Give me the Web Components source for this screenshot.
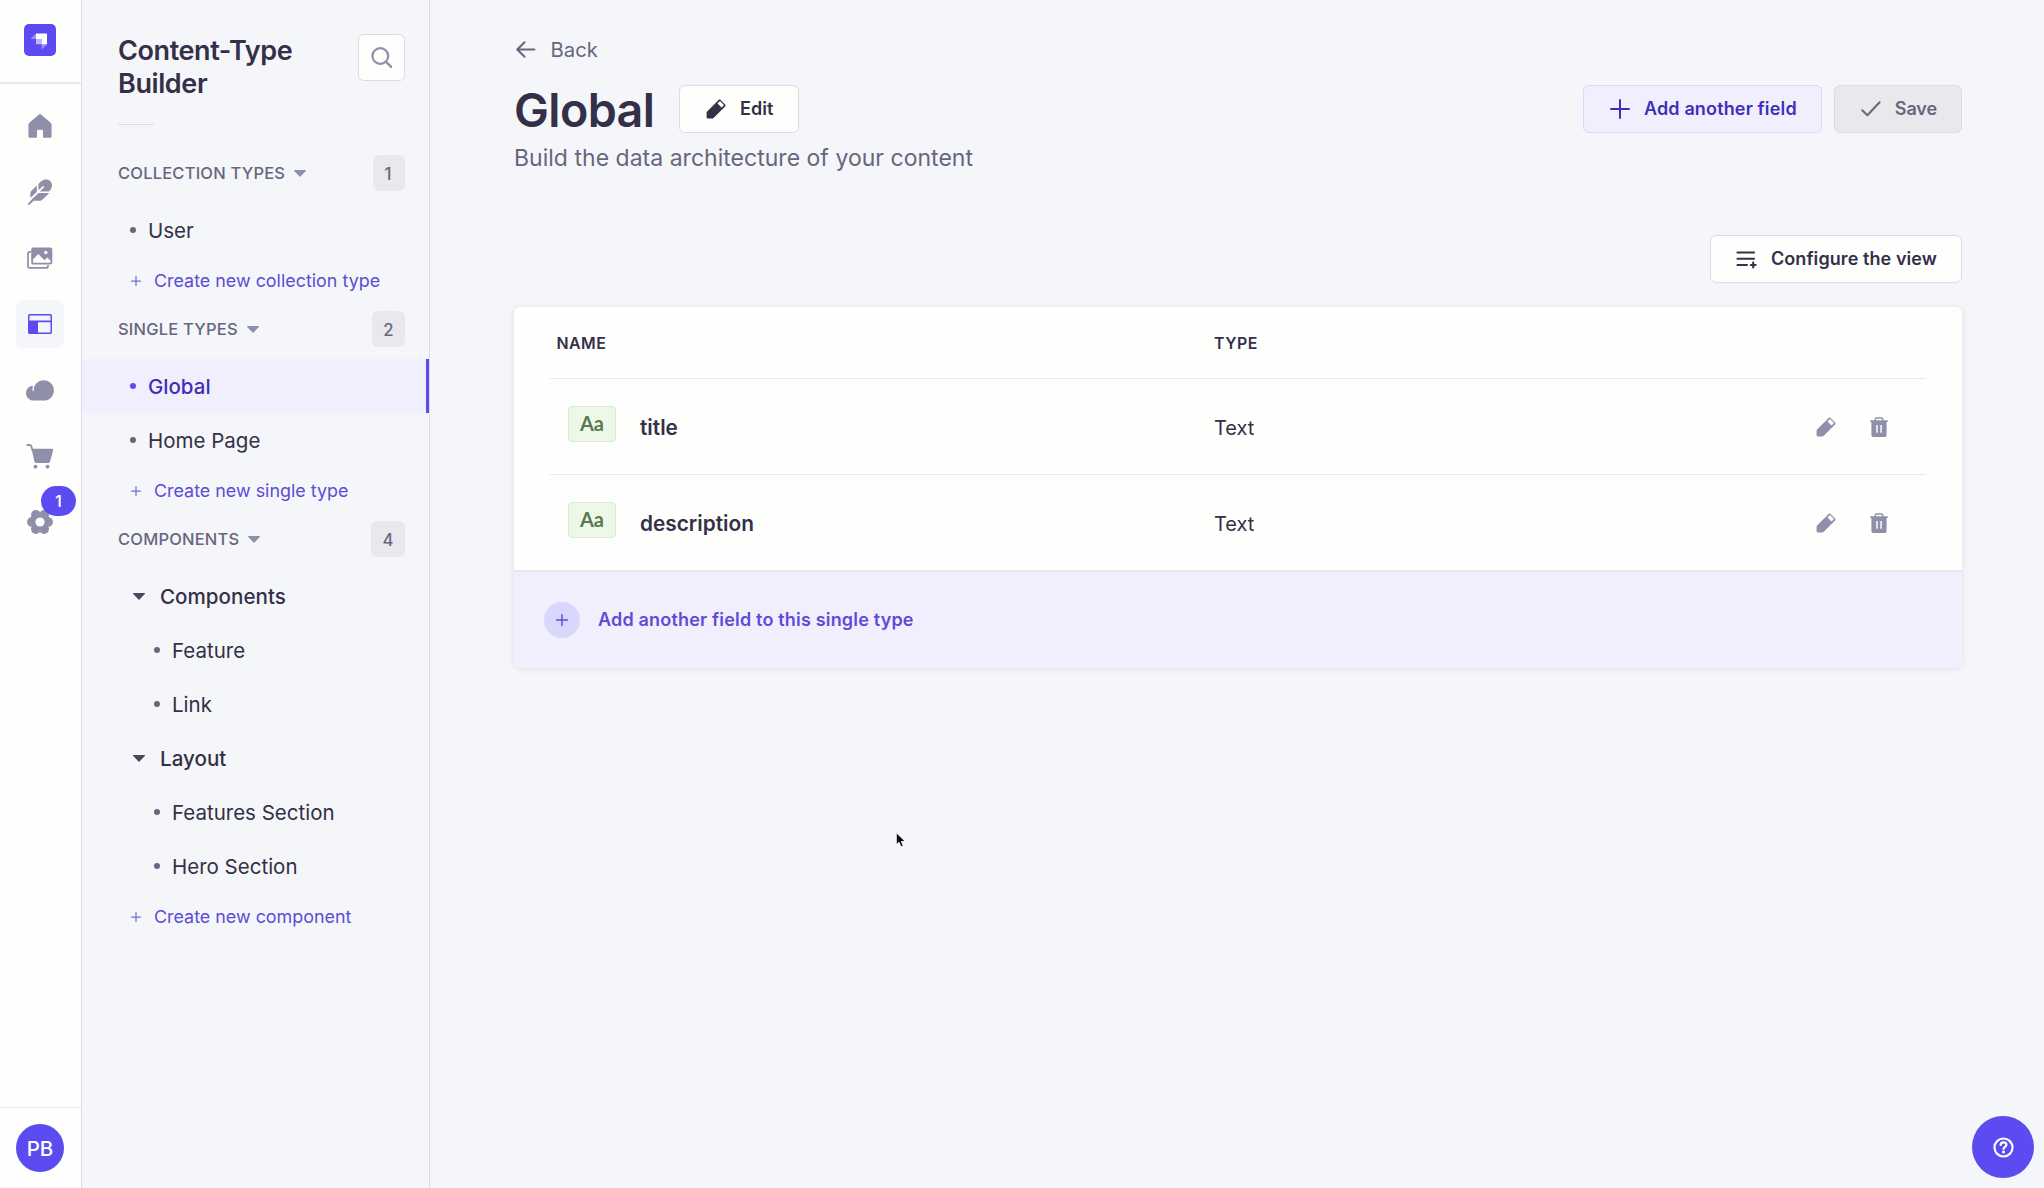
<!DOCTYPE html>
<html lang="en">
<head>
<meta charset="utf-8">
<title>Content-Type Builder</title>
<style>
:root{
  --primary:#5b4bf1;--primary-dark:#3f2fb8;--primary-bg:#f1effd;--primary-soft:#d9d7fb;--link:#5c4cd6;
  --n0:#fefefd;--n100:#f5f6f9;--n150:#e9e8ed;--n200:#dcdbe4;--n500:#908fa9;--n600:#68657f;--n800:#333047;
}
html,body{margin:0;height:100%}
body{font-family:Inter,"Liberation Sans",sans-serif;color:var(--n800);background:var(--n100);overflow:hidden}
</style>
</head>
<body>
<ctb-app></ctb-app>
<script>
const ICONS={
  home:['0 0 24 24','<path fill="currentColor" d="M10.900.500a1.600 1.600 0 0 1 2.200 0l9.500 8.300a3 3 0 0 1 1 2.200V22.300a1.500 1.500 0 0 1-1.500 1.500H16a1 1 0 0 1-1-1V17a1.200 1.200 0 0 0-1.200-1.200h-3.600A1.200 1.200 0 0 0 9 17v5.800a1 1 0 0 1-1 1H1.900A1.500 1.500 0 0 1 .4 22.300V11a3 3 0 0 1 1-2.200z"/>'],
  feather:['0 0 26 26','<path fill="currentColor" d="M3.400 19V14.200c0-1 .4-1.800 1-2.400L9.800 6.400v6.400zM11.400 11.300V5l2.500-2.500C15.800.8 18 .2 20 .5c2.900.4 5 2.900 5 5.800 0 1.700-.5 3.200-1.600 4.500l-1.500 1.800H12.900l4.400-4.700-1.100-1.100zM22.300 14.100l-6.600 6.300c-.9.900-1.900 1.400-3.200 1.400H6.800l-4.500 4c-.9.8-2-.3-1.200-1.200l4.400-4.900 6-5.600z"/>'],
  images:['0 0 26 22','<path fill="none" stroke="currentColor" stroke-width="1.700" d="M4 4.900H2.700A1.700 1.700 0 0 0 1 6.600v12.600c0 1 .7 1.700 1.700 1.700h16.600c1 0 1.700-.7 1.700-1.700V18"/><path fill="currentColor" fill-rule="evenodd" d="M6.200.4h17.100c1.200 0 2 .9 2 2v13.200c0 1.100-.8 2-2 2H6.200c-1.200 0-2-.9-2-2V2.400c0-1.100.8-2 2-2zM6 15.800h17.500v-2.200l-3.300-3-2.600 2.600-6.400-6.100L6 12.400zM18.800 3.800a1.700 1.700 0 1 0 0 3.400 1.700 1.700 0 0 0 0-3.400z"/>'],
  layout:['0 0 24 20','<path fill="currentColor" fill-rule="evenodd" d="M1.800 0h20.400C23.200 0 24 .8 24 1.800v16.400c0 1-.8 1.800-1.800 1.800H1.800C.8 20 0 19.200 0 18.200V1.800C0 .8.800 0 1.800 0zM1.500 1.500v5h21v-5zM10 8.200v10.300h12.500V8.200z"/>'],
  cloud:['0 0 28 21','<path fill="currentColor" d="M17.700.3C12.900.3 9 3.600 7.900 8c-.2.900-.3 1.900-.2 2.800 0 .6-1 .7-1.200 0-.2-1.500 0-3 .4-4.400.1-.5-.2-.8-.7-.7C2.700 6.300 0 9.400 0 13c0 4.200 3.400 7.600 7.500 7.600h10.200c5.700 0 10.200-4.600 10.200-10.200C27.900 4.800 23.400.3 17.700.3z"/>'],
  cart:['0 0 27 25','<path fill="none" stroke="currentColor" stroke-width="1.800" stroke-linecap="round" d="M.4 1h2.400c.7 0 1.200.4 1.400 1L5.600 6.500"/><path fill="currentColor" d="M4.600 4.800h20.400c.8 0 1.300.7 1.100 1.500l-3 11c-.3 1.100-1.200 1.800-2.400 1.800H9.800c-1.100 0-2-.7-2.400-1.700z"/><circle cx="8.500" cy="22.700" r="1.900" fill="currentColor"/><circle cx="20.500" cy="22.700" r="1.900" fill="currentColor"/>'],
  gear:['0 0 26 26','<g fill="currentColor"><circle cx="13" cy="13" r="9"/><circle cx="21" cy="13" r="4.900"/><circle cx="5" cy="13" r="4.900"/><circle cx="17.100" cy="5.900" r="4.900"/><circle cx="8.900" cy="5.900" r="4.900"/><circle cx="17.100" cy="20.100" r="4.900"/><circle cx="8.900" cy="20.100" r="4.900"/></g><circle cx="13" cy="13" r="4.600" fill="var(--n0)"/>'],
  search:['0 0 21 21','<circle cx="9.300" cy="9" r="7.900" fill="none" stroke="currentColor" stroke-width="2.200"/><path d="M15.100 14.800l5 5" stroke="currentColor" stroke-width="2.400" stroke-linecap="round"/>'],
  caret:['0 0 12 7','<path fill="currentColor" d="M.6 0h10.800c.5 0 .8.600.4 1L6.500 6.500a.7.700 0 0 1-1 0L.2 1C-.2.600.1 0 .6 0z"/>'],
  plus:['0 0 20 20','<path d="M10 1v18M1 10h18" stroke="currentColor" stroke-width="var(--sw,2)" stroke-linecap="round"/>'],
  back:['0 0 20 17','<path fill="none" stroke="currentColor" stroke-width="2" stroke-linecap="round" stroke-linejoin="round" d="M18.400 8.500H1.500M8.600 1.200L1.200 8.500l7.400 7.300"/>'],
  pencil:['0 0 20 20','<path fill="currentColor" fill-rule="evenodd" d="M12.600.9c.6-.6 1.400-.6 2 0l4.500 4.500c.6.600.6 1.400 0 2L7.500 18.900c-.4.400-.8.500-1.300.5H1.900c-.8 0-1.300-.5-1.300-1.300v-4.300c0-.5.2-1 .5-1.300zM13.600 2.300l-2.100 2.200 4 4 2.200-2.100c.2-.2.200-.5 0-.7l-3.400-3.400c-.2-.2-.5-.2-.7 0z"/>'],
  trash:['0 0 18 20','<path fill="none" stroke="currentColor" stroke-width="1.500" d="M5.300 4V2.200c0-.7.500-1.200 1.200-1.200h5c.7 0 1.200.500 1.200 1.200V4"/><path fill="currentColor" fill-rule="evenodd" d="M.9 3.300h16.200c1 0 1 1.700 0 1.700h-.5v13.200c0 1-.8 1.700-1.700 1.700H3.100c-1 0-1.700-.8-1.700-1.700V5H.9c-1 0-1-1.700 0-1.700zM6.200 8v7.800h1.500V8zM10.300 8v7.800h1.500V8z"/>'],
  check:['0 0 20 16','<path fill="none" stroke="currentColor" stroke-width="2" stroke-linecap="round" stroke-linejoin="round" d="M1.200 9.200l5.200 5L18.600 1.300"/>'],
  list:['0 0 21 17','<path fill="none" stroke="currentColor" stroke-width="2.100" stroke-linecap="round" d="M1.500 1.500h16.500M1.500 7.800h16.500M1.500 14h9.500M17.200 11.600v4.800M14.800 14h4.800"/>'],
  help:['0 0 21 21','<circle cx="10.500" cy="10.500" r="9" fill="none" stroke="currentColor" stroke-width="2.200"/><path fill="none" stroke="currentColor" stroke-width="2.200" stroke-linecap="round" d="M7.600 8c.1-1.600 1.300-2.700 2.900-2.700s2.900 1 2.900 2.500c0 1.900-2.700 2-2.900 4.200"/><circle cx="10.500" cy="15" r="1.500" fill="currentColor"/>'],
  logo:['0 0 32 32','<rect width="32" height="32" rx="5" fill="#5b4bf1"/><path fill="#fff" d="M12 9.500h10.500c.3 0 .5.200.5.500v10.200h-5.400v-5.300h-5.600z"/><path fill="#fff" opacity=".6" d="M12 14.900h5.100c.3 0 .5.200.5.500v4.900H12.500c-.3 0-.5-.2-.5-.5z"/><path fill="#fff" opacity=".4" d="M12 9.500v5.400H6.900c-.3 0-.4-.3-.2-.5zM17.600 20.300H23l-5.100 5c-.1.200-.3.100-.3-.1z"/>'],
  cursor:['0 0 14 20','<path fill="#0a0a0c" stroke="#fff" stroke-width="1" d="M1.500 1.500v14l3.200-2.800 2.300 5.300 2.600-1.200-2.200-5.100h4.600z"/>']
};
function define(name,css,html){
  customElements.define(name,class extends HTMLElement{
    constructor(){super();this.attachShadow({mode:'open'})}
    connectedCallback(){
      const t=document.createElement('template');
      t.innerHTML='<style>*{box-sizing:border-box}:host{box-sizing:border-box}'+css+'</style>'+(typeof html==='function'?html(this):html);
      this.shadowRoot.replaceChildren(t.content.cloneNode(true));
    }
  });
}
define('ui-icon',':host{display:block;flex:none}svg{display:block;overflow:visible}',el=>{
  const [vb,body]=ICONS[el.getAttribute('name')];const p=vb.split(' ');
  return `<svg viewBox="${vb}" width="${el.getAttribute('w')||p[2]}" height="${el.getAttribute('h')||p[3]}">${body}</svg>`;
});
define('nav-item',`:host{display:flex;width:48px;height:48px;border-radius:6px;align-items:center;justify-content:center;color:var(--n500);position:relative}
:host([active]){background:var(--n100);color:var(--primary)}
span{position:absolute;left:25px;top:-12px;width:35px;height:30px;border-radius:15px;background:var(--primary);color:#fff;font:500 16.500px/30px Inter;text-align:center}`,
  el=>`<ui-icon name="${el.getAttribute('icon')}"></ui-icon>${el.hasAttribute('badge')?`<span>${el.getAttribute('badge')}</span>`:''}`);
define('main-nav',`:host{display:flex;flex-direction:column;align-items:center;width:82px;height:100%;background:var(--n0);border-right:1px solid var(--n200);flex:none}
.logo{width:100%;height:84px;border-bottom:2px solid var(--n150);padding:24px 0 0 24px;flex:none}
nav{display:flex;flex-direction:column;gap:18px;padding-top:18px;width:100%;padding-left:16px;flex:1}
.foot{width:100%;height:81px;border-top:1px solid var(--n150);padding:16px 0 0 16px}
.av{width:48px;height:48px;border-radius:50%;background:var(--primary);color:#fff;font:500 20.500px/49px Inter;text-align:center}`,
`<div class="logo"><ui-icon name="logo"></ui-icon></div>
<nav><nav-item icon="home"></nav-item><nav-item icon="feather"></nav-item><nav-item icon="images"></nav-item><nav-item icon="layout" active></nav-item><nav-item icon="cloud"></nav-item><nav-item icon="cart"></nav-item><nav-item icon="gear" badge="1"></nav-item></nav>
<div class="foot"><div class="av">PB</div></div>`);
define('nav-section',`:host{display:block;margin-bottom:6px}
header{display:flex;align-items:center;height:36px;padding:0 24px 0 36px;margin-bottom:12px}
.l{font:500 16.500px/24px Inter;letter-spacing:.2px;color:var(--n600);text-transform:uppercase}
ui-icon{color:var(--n500);margin-left:9px}
.c{margin-left:auto;height:36px;min-width:32px;padding:0 11.500px;border-radius:6px;background:var(--n150);color:var(--n600);font:500 16.800px/38px Inter}`,
el=>`<header><span class="l">${el.getAttribute('label')}</span><ui-icon name="caret"></ui-icon><span class="c">${el.getAttribute('count')}</span></header><slot></slot>`);
define('nav-link',`:host{display:flex;align-items:center;height:54px;padding-left:48px;font:400 20.500px/30px Inter;color:var(--n800)}
:host([sub]){padding-left:72px}
i{width:6px;height:6px;border-radius:50%;background:var(--n600);margin-right:12px}
:host([active]){background:var(--primary-bg);border-right:3px solid var(--primary);color:var(--primary-dark);font-weight:500}
:host([active]) i{background:var(--primary)}
.t{padding-top:2px}`,'<i></i><span class="t"><slot></slot></span>');
define('nav-group',`:host{display:flex;align-items:center;height:54px;padding-left:51px;font:500 20.600px/30px Inter;color:var(--n800)}
ui-icon{color:#4b485e;margin-right:15px}.t{padding-top:2px}`,'<ui-icon name="caret"></ui-icon><span class="t"><slot></slot></span>');
define('nav-create',`:host{display:flex;align-items:center;height:48px;padding-left:49px;font:400 17.900px/24px Inter;color:var(--link)}
ui-icon{--sw:2.500;opacity:.8;margin-right:13px}`,'<ui-icon name="plus" w="10" h="10"></ui-icon><span><slot></slot></span>');
define('sub-nav',`:host{display:block;width:348px;height:100%;border-right:1px solid var(--n200);flex:none}
header{display:flex;justify-content:space-between;padding:34px 24px 0 36px;align-items:flex-start}
h2{margin:0;font:600 27px/33px Inter;letter-spacing:-.4px;width:200px}
.s{width:47px;height:47px;border:1px solid var(--n200);border-radius:6px;background:var(--n0);color:var(--n500);display:flex;align-items:center;justify-content:center}
hr{width:36px;height:1px;border:0;background:var(--n200);margin:24px 0 30px 36px}`,
`<header><h2>Content-Type Builder</h2><div class="s"><ui-icon name="search"></ui-icon></div></header><hr>
<nav-section label="Collection Types" count="1"><nav-link>User</nav-link><nav-create>Create new collection type</nav-create></nav-section>
<nav-section label="Single Types" count="2"><nav-link active>Global</nav-link><nav-link>Home Page</nav-link><nav-create>Create new single type</nav-create></nav-section>
<nav-section label="Components" count="4"><nav-group>Components</nav-group><nav-link sub>Feature</nav-link><nav-link sub>Link</nav-link><nav-group>Layout</nav-group><nav-link sub>Features Section</nav-link><nav-link sub>Hero Section</nav-link><nav-create>Create new component</nav-create></nav-section>`);
define('ui-button',`:host{display:flex;align-items:center;height:48px;padding:0 24px;gap:12px;border:1px solid var(--n200);border-radius:6px;background:var(--n0);font:600 18px/24px Inter;letter-spacing:.08px;color:var(--n800);white-space:nowrap}
:host([kind=secondary]){background:var(--primary-bg);border-color:var(--primary-soft);color:var(--primary-dark);letter-spacing:.15px}
:host([kind=disabled]){background:var(--n150);color:var(--n600);letter-spacing:-.1px}
.i{width:24px;display:flex;justify-content:center}`,
el=>`<span class="i"><ui-icon name="${el.getAttribute('icon')}"></ui-icon></span><span><slot></slot></span>`);
define('field-row',`:host{display:flex;align-items:center;height:96px;margin:0 36px;border-top:1px solid var(--n150);font:400 20px/30px Inter}
.n{display:flex;align-items:center;width:664px;padding-left:18px}
.b{width:48px;height:36px;border:1px solid #d3ecc9;border-radius:4px;background:#edf8e8;color:#557a4f;font:700 20px/33px Lato,sans-serif;text-align:center;margin-right:24px;position:relative;top:-3px}
b{font-weight:600;font-size:20.800px}
.t{padding-top:2px}
.a{display:flex;gap:34px;color:var(--n500);margin-left:auto;padding-right:38px;align-items:center}`,
`<div class="n"><span class="b">Aa</span><b class="t"><slot></slot></b></div><span class="t">Text</span><div class="a"><ui-icon name="pencil"></ui-icon><ui-icon name="trash"></ui-icon></div>`);
define('field-table',`:host{display:block;background:var(--n0);border-radius:6px;box-shadow:0 1px 6px rgba(33,33,52,.1);overflow:hidden}
.h{display:flex;height:71px;align-items:center;padding:3px 42.500px 0;font:600 15.900px/24px Inter;letter-spacing:.45px}
.h span:first-child{width:657.500px}
.f{display:flex;align-items:center;height:98px;border-top:2px solid var(--n150);background:var(--primary-bg);padding-left:30px;gap:18px;font:600 18px/24px Inter;letter-spacing:.18px;color:var(--link)}
.p{width:36px;height:36px;border-radius:50%;background:var(--primary-soft);display:flex;align-items:center;justify-content:center}
.p ui-icon{--sw:2.400}`,
`<div class="h"><span>NAME</span><span>TYPE</span></div><slot></slot><div class="f"><span class="p"><ui-icon name="plus" w="12" h="12"></ui-icon></span><span>Add another field to this single type</span></div>`);
define('page-main',`:host{display:block;flex:1;padding:34px 82px 0 84px}
.back{display:flex;align-items:center;gap:14.500px;height:30px;font:400 20.300px/30px Inter;color:var(--n600);padding-left:2px}
.back span{padding-top:1px}
.row{display:flex;align-items:center;height:48px;margin-top:21px}
h1{margin:0 24px 0 0;padding-top:1px;width:141px;font:600 46.600px/60px Inter;letter-spacing:-.6px}
.r{margin-left:auto;display:flex;gap:12px}
p{margin:9px 0 0;font:400 23px/32px Inter;letter-spacing:.02px;color:var(--n600)}
.cfg{display:flex;justify-content:flex-end;margin:61px 0 24px}`,
`<div class="back"><ui-icon name="back"></ui-icon><span>Back</span></div>
<div class="row"><h1>Global</h1><ui-button icon="pencil">Edit</ui-button><div class="r"><ui-button kind="secondary" icon="plus">Add another field</ui-button><ui-button kind="disabled" icon="check">Save</ui-button></div></div>
<p>Build the data architecture of your content</p>
<div class="cfg"><ui-button icon="list">Configure the view</ui-button></div>
<field-table><field-row>title</field-row><field-row>description</field-row></field-table>`);
define('ctb-app',`:host{display:flex;height:1188px;width:2044px;position:relative}
.help{position:absolute;left:1972px;top:1116px;width:62px;height:62px;border-radius:50%;background:var(--primary);color:#fff;display:flex;align-items:center;justify-content:center}
.cur{position:absolute;left:895px;top:831px}`,
`<main-nav></main-nav><sub-nav></sub-nav><page-main></page-main><div class="help"><ui-icon name="help"></ui-icon></div><ui-icon class="cur" name="cursor" w="12" h="18"></ui-icon>`);
</script>
</body>
</html>
